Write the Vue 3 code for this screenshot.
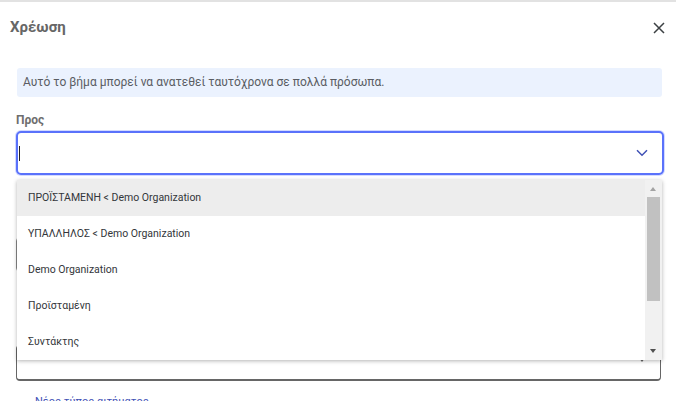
<script setup>
const options = [
  { label: 'ΠΡΟΪΣΤΑΜΕΝΗ < Demo Organization', active: true },
  { label: 'ΥΠΑΛΛΗΛΟΣ < Demo Organization' },
  { label: 'Demo Organization' },
  { label: 'Προϊσταμένη' },
  { label: 'Συντάκτης' }
]
</script>

<template>
  <div class="dialog">
    <header class="head">
      <h1 class="title">Χρέωση</h1>
      <svg class="close" width="12" height="12" viewBox="0 0 12 12" aria-label="close">
        <path d="M1 1 L11 11 M11 1 L1 11" fill="none" stroke="#3c4043" stroke-width="1.5" />
      </svg>
    </header>

    <div class="body">
      <p class="info">Αυτό το βήμα μπορεί να ανατεθεί ταυτόχρονα σε πολλά πρόσωπα.</p>
      <label class="label">Προς</label>
      <div class="combo">
        <span class="caret"></span>
        <svg class="chev" width="12" height="8" viewBox="0 0 12 8">
          <path d="M1 1.2 L6 6.2 L11 1.2" fill="none" stroke="#3f51b5" stroke-width="1.5" />
        </svg>
      </div>

      <div class="under-field first"></div>
      <div class="under-field second"><span class="under-arrow"></span></div>
      <a class="link">Νέος τύπος αιτήματος</a>

      <div class="menu">
        <ul class="list">
          <li v-for="o in options" :key="o.label" class="item" :class="{ active: o.active }">{{ o.label }}</li>
        </ul>
        <div class="scrollbar">
          <span class="tri up"></span>
          <div class="track"><div class="thumb"></div></div>
          <span class="tri down"></span>
        </div>
      </div>
    </div>
  </div>
</template>

<style>
html, body { margin: 0; background: #fff; overflow: hidden; }
</style>

<style scoped>
.dialog {
  width: 676px;
  height: 401px;
  overflow: hidden;
  box-sizing: border-box;
  border-top: 2px solid #e2e2e2;
  font-family: Roboto, "Noto Sans", sans-serif;
  background: #fff;
}
.head {
  display: flex;
  align-items: center;
  justify-content: space-between;
  padding: 16px 11px 1px 10px;
  height: 18px;
}
.title {
  margin: 0;
  font-size: 15px;
  line-height: 18px;
  font-weight: 700;
  color: #666;
}
.close {
  position: relative;
  top: 1px;
}
.body {
  position: relative;
  padding: 31px 12px 0 16px;
}
.info {
  margin: 0 2px 0 1px;
  height: 29px;
  box-sizing: border-box;
  padding: 0 6px;
  line-height: 29px;
  font-size: 12px;
  color: #5a5d63;
  background: #ebf2fe;
  border-radius: 3px;
}
.label {
  display: block;
  margin-top: 15px;
  height: 16px;
  line-height: 16px;
  font-size: 12px;
  font-weight: 700;
  color: #6e6e6e;
}
.combo {
  margin-top: 3px;
  height: 44px;
  box-sizing: border-box;
  border: 2px solid #5a72fb;
  border-radius: 5px;
  box-shadow: 0 0 0 1px #d3daff;
  display: flex;
  align-items: center;
  justify-content: space-between;
  padding: 0 14px 0 1px;
  background: #fff;
}
.caret {
  width: 1px;
  height: 15px;
  background: #222;
}
.under-field {
  box-sizing: border-box;
  border: 1px solid #888;
  border-radius: 4px;
  margin-right: 3px;
}
.under-field.first {
  margin-top: 62px;
  height: 35px;
}
.under-field.second {
  margin-top: 73px;
  height: 36px;
  position: relative;
  border-color: #666;
  border-width: 1px 1px 2px 1px;
}
.under-arrow {
  position: absolute;
  right: 15px;
  top: 12px;
  border-left: 3px solid transparent;
  border-right: 3px solid transparent;
  border-top: 4px solid #666;
}
.link {
  display: block;
  margin: 14px 0 0 19px;
  font-size: 11px;
  line-height: 14px;
  color: #3f51b5;
}
.menu {
  position: absolute;
  left: 17px;
  top: 143px;
  width: 645px;
  height: 180px;
  display: flex;
  background: #fff;
  box-shadow: 0 1px 4px rgba(0, 0, 0, 0.3);
}
.list {
  flex: 1;
  margin: 0;
  padding: 0;
  list-style: none;
}
.item {
  height: 36px;
  line-height: 36px;
  padding-left: 11px;
  font-size: 10.5px;
  color: #33363a;
}
.item.active {
  background: #ededed;
}
.scrollbar {
  width: 17px;
  background: #f1f1f1;
  display: flex;
  flex-direction: column;
  align-items: center;
  position: relative;
}
.tri {
  position: absolute;
  left: 5px;
  border-left: 3.5px solid transparent;
  border-right: 3.5px solid transparent;
}
.tri.up { top: 7px; border-bottom: 4px solid #a3a3a3; }
.tri.down { bottom: 7px; border-top: 4px solid #505050; }
.track {
  margin-top: 17px;
  width: 13px;
}
.thumb {
  height: 104px;
  background: #c1c1c1;
}
</style>
